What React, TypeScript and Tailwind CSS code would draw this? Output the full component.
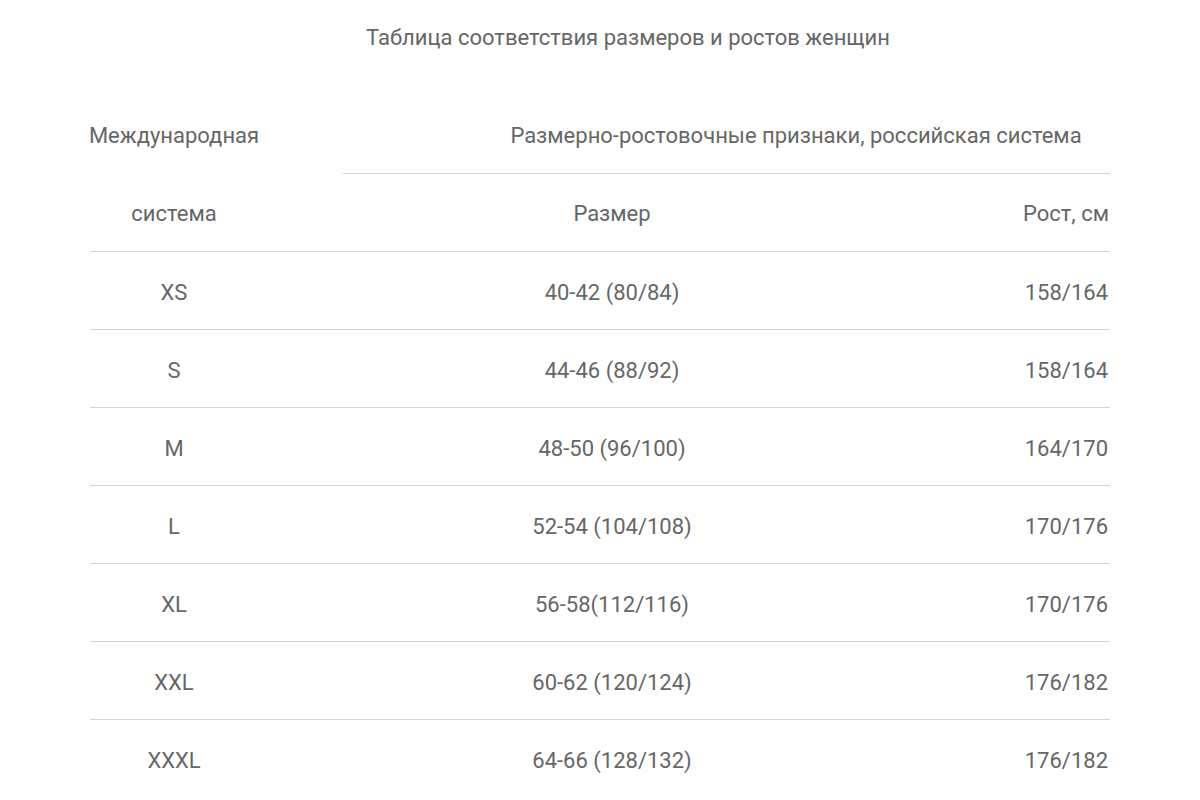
import React from "react";

const rows: [string, string, string][] = [
  ["XS", "40-42 (80/84)", "158/164"],
  ["S", "44-46 (88/92)", "158/164"],
  ["M", "48-50 (96/100)", "164/170"],
  ["L", "52-54 (104/108)", "170/176"],
  ["XL", "56-58(112/116)", "170/176"],
  ["XXL", "60-62 (120/124)", "176/182"],
  ["XXXL", "64-66 (128/132)", "176/182"],
];

export default function App() {
  return (
    <div
      className="w-[1200px] h-[800px] bg-white text-[#666666] text-[22px] overflow-hidden"
      style={{ fontFamily: "Roboto, 'Noto Sans', sans-serif" }}
    >
      <div className="w-[1020px] mx-auto">
        <div className="h-[74px] flex items-center pl-[276px]">
          Таблица соответствия размеров и ростов женщин
        </div>
        <div className="h-[23px]" />
        <div className="flex h-[77px]">
          <div className="w-[168px] flex items-center justify-center">Международная</div>
          <div className="w-[85px]" />
          <div className="flex-1 flex items-center justify-center pl-[139px] border-b border-[#d4d4d4]">
            Размерно-ростовочные признаки, российская система
          </div>
        </div>
        <div className="flex h-[78px] pt-[2px] border-b border-[#d4d4d4]">
          <div className="w-[168px] flex items-center justify-center">система</div>
          <div className="w-[708px] flex items-center justify-center">Размер</div>
          <div className="flex-1 flex items-center justify-end pr-[1px]">Рост, см</div>
        </div>
        {rows.map(([a, b, c], i) => (
          <div
            key={a}
            className={
              i < rows.length - 1
                ? "flex h-[78px] pt-[3px] border-b border-[#d4d4d4]"
                : "flex h-[78px] pt-[3px]"
            }
          >
            <div className="w-[168px] flex items-center justify-center">{a}</div>
            <div className="w-[708px] flex items-center justify-center">{b}</div>
            <div className="flex-1 flex items-center justify-end pr-[2px]">{c}</div>
          </div>
        ))}
      </div>
    </div>
  );
}
